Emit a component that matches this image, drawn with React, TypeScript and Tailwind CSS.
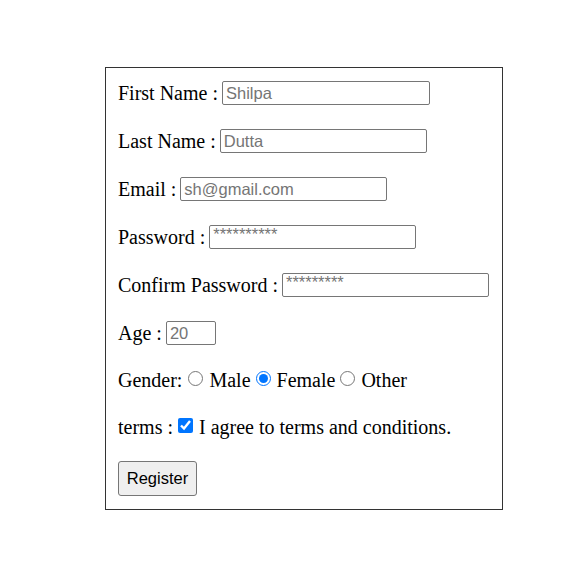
export default function App() {
  const inputCls =
    'h-[24px] border border-[#767676] rounded-[2px] bg-white px-[3px] text-[16.5px] text-[#757575] placeholder:text-[#757575] outline-none';
  const inputFont = { fontFamily: '"Liberation Sans", Arial, sans-serif' };

  return (
    <div className="min-h-[579px] bg-white pt-[67px] pl-[105px]" style={{ fontFamily: '"Liberation Serif", "Times New Roman", serif' }}>
      <form className="w-[398px] h-[443px] border border-[#333] px-[12px] pt-[1px] text-[20px] text-black">
        <div className="h-[48px] flex items-center">
          <span>First Name :</span>
          <input className={`${inputCls} ml-[4px] w-[208px]`} style={inputFont} placeholder="Shilpa" />
        </div>
        <div className="h-[48px] flex items-center">
          <span>Last Name :</span>
          <input className={`${inputCls} ml-[4px] w-[207px]`} style={inputFont} placeholder="Dutta" />
        </div>
        <div className="h-[48px] flex items-center">
          <span>Email :</span>
          <input className={`${inputCls} ml-[4px] w-[207px]`} style={inputFont} placeholder="sh@gmail.com" />
        </div>
        <div className="h-[48px] flex items-center">
          <span>Password :</span>
          <input className={`${inputCls} ml-[4px] w-[207px] pb-[6px]`} style={inputFont} placeholder="**********" />
        </div>
        <div className="h-[48px] flex items-center">
          <span>Confirm Password :</span>
          <input className={`${inputCls} ml-[4px] w-[207px] pb-[6px]`} style={inputFont} placeholder="*********" />
        </div>
        <div className="h-[48px] flex items-center">
          <span>Age :</span>
          <input className={`${inputCls} ml-[4px] w-[50px]`} style={inputFont} placeholder="20" />
        </div>
        <div className="h-[46px] flex items-center">
          <span>Gender:</span>
          <input type="radio" name="gender" className="ml-[6px] w-[15px] h-[15px] -mt-[3px]" />
          <span className="ml-[6px]">Male</span>
          <input type="radio" name="gender" defaultChecked className="ml-[5px] w-[15px] h-[15px] -mt-[3px]" />
          <span className="ml-[6px]">Female</span>
          <input type="radio" name="gender" className="ml-[5px] w-[15px] h-[15px] -mt-[3px]" />
          <span className="ml-[6px]">Other</span>
        </div>
        <div className="h-[48px] flex items-center">
          <span>terms :</span>
          <input type="checkbox" defaultChecked className="ml-[5px] w-[15px] h-[15px] -mt-[3px]" />
          <span className="ml-[6px]">I agree to terms and conditions.</span>
        </div>
        <button
          type="button"
          className="mt-[10px] w-[79px] h-[35px] border border-[#767676] rounded-[3px] bg-[#efefef] text-[16.5px] text-black"
          style={inputFont}
        >
          Register
        </button>
      </form>
    </div>
  );
}
